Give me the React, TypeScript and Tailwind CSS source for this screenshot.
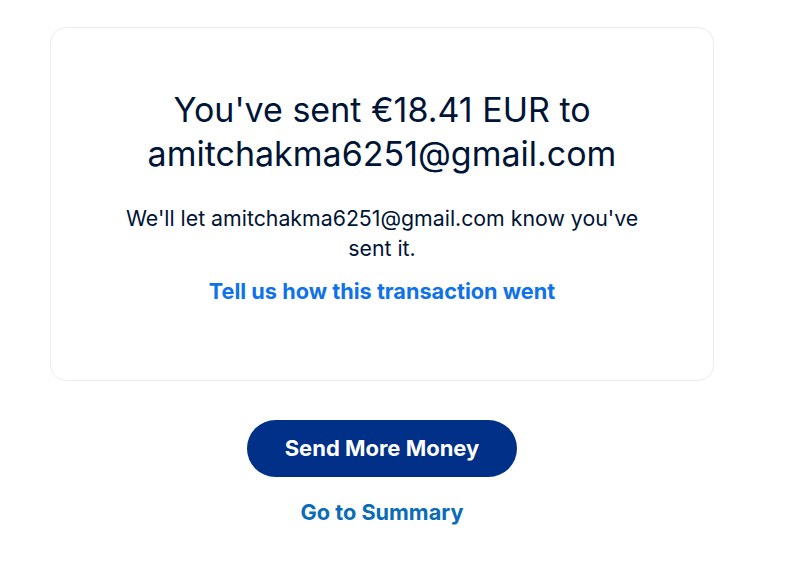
export default function App() {
	return (
		<div className="min-h-[580px] bg-white font-['Inter',sans-serif] pt-[27px] pl-[50px]">
			<div className="w-[664px] flex flex-col items-center">
				<div className="w-full h-[354px] rounded-[16px] border border-[#ececec] flex flex-col items-center pt-[60px] text-center">
					<h1 className="text-[#001435] text-[34px] leading-[44px] font-normal w-[560px]">
						You've sent €18.41 EUR to amitchakma6251@gmail.com
					</h1>
					<p className="mt-[27px] text-[#001435] text-[21.3px] leading-[30px] w-[540px]">
						We'll let amitchakma6251@gmail.com know you've sent it.
					</p>
					<a href="#" className="mt-[14px] text-[#1072eb] text-[21.7px] leading-[28px] font-bold">
						Tell us how this transaction went
					</a>
				</div>
				<button className="mt-[39px] w-[270px] h-[57px] rounded-full bg-[#003087] text-white text-[22px] font-bold">
					Send More Money
				</button>
				<a href="#" className="mt-[21px] text-[#0a6cb8] text-[21.7px] leading-[28px] font-bold">
					Go to Summary
				</a>
			</div>
		</div>
	)
}
